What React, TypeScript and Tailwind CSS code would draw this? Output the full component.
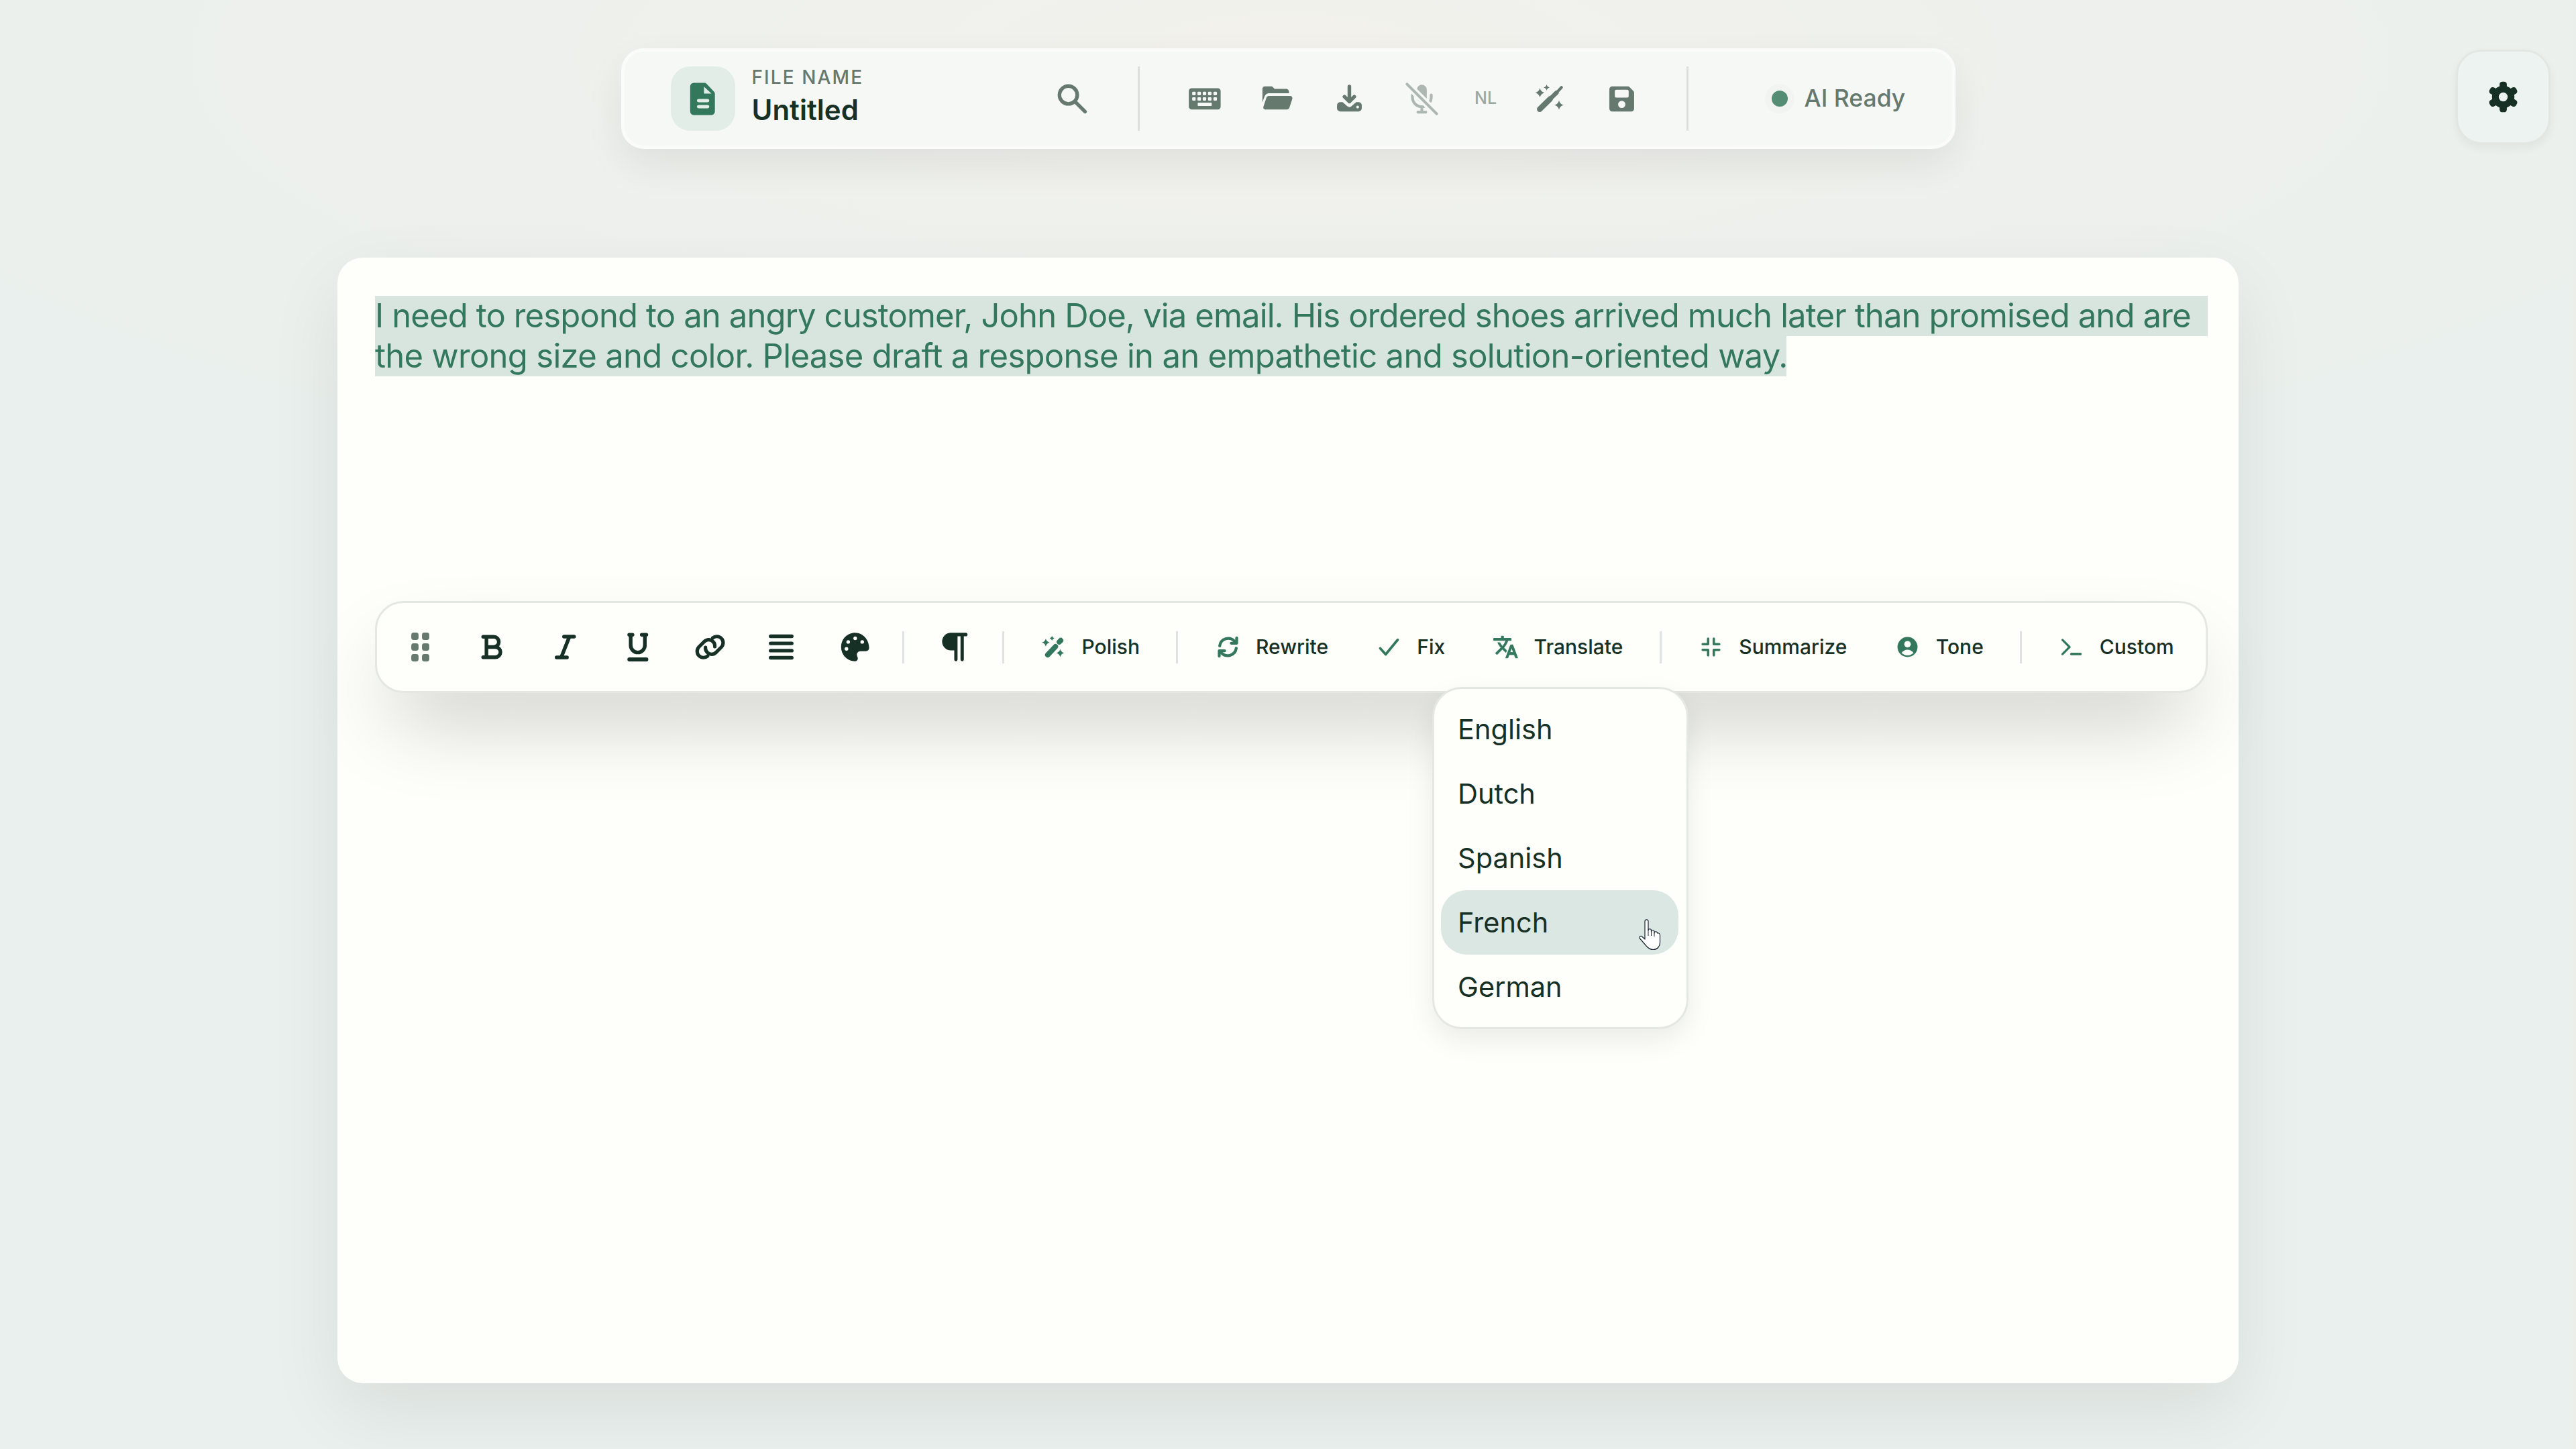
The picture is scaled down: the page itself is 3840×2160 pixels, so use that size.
import type { ReactNode } from 'react';

const BAR_BG = '#f6f8f5';
const CARD_BG = '#fefffb';

function Ico({ size = 59, className = '', children }: { size?: number; className?: string; children: ReactNode }) {
  return (
    <svg width={size} height={size} viewBox="0 0 24 24" fill="currentColor" className={`shrink-0 ${className}`}>
      {children}
    </svg>
  );
}

function Strokes({ w = 2.2, children }: { w?: number; children: ReactNode }) {
  return (
    <g fill="none" stroke="currentColor" strokeWidth={w} strokeLinecap="round" strokeLinejoin="round">
      {children}
    </g>
  );
}

// four point star used by the wand icons
function star(x: number, y: number, r: number) {
  const c = r * 0.2;
  return `M${x} ${y - r}Q${x + c} ${y - c} ${x + r} ${y}Q${x + c} ${y + c} ${x} ${y + r}Q${x - c} ${y + c} ${x - r} ${y}Q${x - c} ${y - c} ${x} ${y - r}Z`;
}

const SearchIcon = () => (
  <Ico>
    <Strokes>
      <circle cx="9.6" cy="9.6" r="5.4" />
      <path d="M13.6 13.6 19.7 19.7" />
    </Strokes>
  </Ico>
);

const KeyboardIcon = () => {
  const xs = [5.6, 8.8, 12, 15.2, 18.5];
  return (
    <Ico>
      <rect x="2.5" y="5.5" width="19.3" height="12.9" rx="1.7" />
      {[8.7, 12].map((y) =>
        xs.map((x) => <rect key={`${x}-${y}`} x={x - 1.05} y={y - 1.05} width="2.1" height="2.1" rx="0.5" fill={BAR_BG} />),
      )}
      <rect x="7.9" y="14.2" width="8.5" height="2.1" rx="0.4" fill={BAR_BG} />
    </Ico>
  );
};

const FolderIcon = () => (
  <Ico>
    <path d="M3.2 6a1.6 1.6 0 0 1 1.6-1.6h3.6c.5 0 .9.2 1.2.5l1 1h7c.9 0 1.7.8 1.7 1.7v.9H7.3C5.9 8.5 5 9.3 4.6 10.3L3.2 14z" />
    <path d="M7.2 10.2H20c1 0 1.6.9 1.3 1.8l-1.7 5.2c-.2.7-.8 1.2-1.6 1.2H5c-1 0-1.5-.8-1.2-1.7l1.8-5.4c.2-.7.8-1.1 1.6-1.1z" />
  </Ico>
);

const DownloadIcon = () => (
  <Ico>
    <Strokes>
      <path d="M12 4.5V13.6M9 10.6l3 3 3-3" />
    </Strokes>
    <path d="M6.5 13.9h1.4l2.9 2.6c.7.6 1.7.6 2.4 0l2.9-2.6h1.4a2 2 0 0 1 2 2v1.7a2 2 0 0 1-2 2h-11a2 2 0 0 1-2-2v-1.7a2 2 0 0 1 2-2z" />
    <circle cx="17" cy="16.9" r="0.85" fill={BAR_BG} />
  </Ico>
);

const MicOffIcon = () => (
  <Ico className="opacity-50">
    <rect x="9" y="3.4" width="6" height="10.6" rx="3" />
    <Strokes w={1.7}>
      <path d="M6.3 9.6v1.4a5.7 5.7 0 0 0 11.4 0V9.6M12 16.8v2.8M9.6 20h4.8" />
      <path d="M3 3 21 21" stroke={BAR_BG} strokeWidth="4.4" />
      <path d="M3 3 21 21" />
    </Strokes>
  </Ico>
);

const WandThinIcon = () => (
  <Ico>
    <path d={star(6.3, 8.2, 2.8)} />
    <path d={star(10.4, 5.1, 1.8)} />
    <path d={star(17.9, 15.7, 2.8)} />
    <g fill="none" stroke="currentColor" strokeLinecap="round">
      <path d="M6.2 18.2 12.5 12" strokeWidth="3.4" />
      <path d="M12.5 12 16.4 8.2" strokeWidth="2.6" />
      <path d="M16.4 8.2 19.4 5" strokeWidth="1.7" />
    </g>
  </Ico>
);

const SaveIcon = () => (
  <Ico>
    <path
      fillRule="evenodd"
      d="M6.2 4.4h9.4c.5 0 .9.2 1.2.5L19 7.1c.3.3.5.7.5 1.2v9.6a1.7 1.7 0 0 1-1.7 1.7H6.2a1.7 1.7 0 0 1-1.7-1.7V6.1a1.7 1.7 0 0 1 1.7-1.7zM8.7 6.4a.9.9 0 0 0-.9.9v3a.9.9 0 0 0 .9.9h6.6a.9.9 0 0 0 .9-.9v-3a.9.9 0 0 0-.9-.9zM12 13.1a2.2 2.2 0 1 0 0 4.4 2.2 2.2 0 0 0 0-4.4z"
    />
  </Ico>
);

const GearIcon = () => (
  <Ico>
    {[0, 60, 120].map((a) => (
      <rect key={a} x="9.8" y="2.7" width="4.4" height="18.6" rx="1.7" transform={`rotate(${a} 12 12)`} />
    ))}
    <circle cx="12" cy="12" r="6.8" />
    <circle cx="12" cy="12" r="2.7" fill="#edf3f1" />
  </Ico>
);

const FileIcon = () => (
  <Ico>
    <path d="M6.6 2.2H13c.5 0 1 .2 1.3.5l4.6 4.9c.3.3.5.8.5 1.2v10.8a2.2 2.2 0 0 1-2.2 2.2H6.6a2.2 2.2 0 0 1-2.2-2.2V4.4a2.2 2.2 0 0 1 2.2-2.2z" />
    <path d="M12.8 4.6v4.1h4.5z" fill="#e2ede8" />
    <rect x="8.5" y="12" width="7.5" height="2" rx="1" fill="#e2ede8" />
    <rect x="8.5" y="15.7" width="7.5" height="2" rx="1" fill="#e2ede8" />
  </Ico>
);

const GripIcon = () => (
  <Ico>
    {[8.75, 15.25].map((x) =>
      [5.5, 12, 18.5].map((y) => <rect key={`${x}-${y}`} x={x - 2.2} y={y - 2.2} width="4.4" height="4.4" rx="1.4" />),
    )}
  </Ico>
);

const BoldIcon = () => (
  <Ico>
    <Strokes>
      <path d="M6.6 5.8H13a3.1 3.1 0 0 1 0 6.2H8.6M8.6 12H14a3.1 3.1 0 0 1 0 6.2H6.6M8.6 5.8V18.2" />
    </Strokes>
  </Ico>
);

const ItalicIcon = () => (
  <Ico>
    <Strokes>
      <path d="M11.7 5.7h6.1M7.2 18.3h6.3M15 5.7 10 18.3" />
    </Strokes>
  </Ico>
);

const UnderlineIcon = () => (
  <Ico>
    <Strokes>
      <path d="M7.3 4.6h2M14.9 4.6h2.8M8.2 4.6V11a4.3 4.3 0 0 0 8.6 0V4.6" />
      <path d="M7.4 19.5h10.3" strokeWidth="2.4" />
    </Strokes>
  </Ico>
);

const LinkIcon = () => (
  <Ico>
    <Strokes w={2.1}>
      <path d="M10.9 17.5c-1.5 1.3-3.8 1.2-5.2-.2-1.5-1.5-1.5-3.9 0-5.4l3.2-3.2c1.5-1.5 3.9-1.5 5.3 0 .8.8 1.2 1.9 1.1 3.1" />
      <path d="M14 6.5c1.5-1.3 3.8-1.2 5.2.2 1.5 1.5 1.5 3.9 0 5.4L16 15.3c-1.5 1.5-3.9 1.5-5.3 0-.8-.8-1.2-1.9-1.1-3.1" />
    </Strokes>
  </Ico>
);

const JustifyIcon = () => (
  <Ico>
    <Strokes>
      <path d="M5.6 5.5h12.8M5.6 9.8h12.8M5.6 14.2h12.8M5.6 18.5h12.8" />
    </Strokes>
  </Ico>
);

const PaletteIcon = () => (
  <Ico>
    <path d="M12.9 3.4C8.1 3.3 4.4 7.1 4.4 12c0 4.8 3.8 8.6 8.4 8.6 1.2 0 1.9-.9 1.7-2-.2-.9-.7-1.6-.5-2.5.3-1 1.1-1.6 2.2-1.6h3.2c1.2 0 2-.8 2-2-.1-5-3.7-9-8.5-9.1z" />
    {[
      [8.7, 8.9],
      [12.95, 6.7],
      [17.2, 8.9],
      [7.65, 13.1],
    ].map(([x, y]) => (
      <circle key={x} cx={x} cy={y} r="1.1" fill={CARD_BG} />
    ))}
  </Ico>
);

const ParagraphIcon = () => (
  <Ico>
    <path d="M10 3.4h9.4a1.05 1.05 0 0 1 0 2.1h-1.2v14.1a1 1 0 0 1-2 0V5.5h-1.8v14.1a1 1 0 0 1-2 0V14h-1.7A5.3 5.3 0 0 1 10 3.4z" />
  </Ico>
);

const WandIcon = () => (
  <Ico size={39}>
    <path d={star(4.9, 7.9, 3.6)} />
    <path d={star(10.6, 4, 2.2)} />
    <path d={star(18.1, 17.5, 3.6)} />
    <g fill="none" stroke="currentColor" strokeLinecap="round" strokeWidth="4.8">
      <path d="M6.6 19.2 13.8 11.6" />
      <path d="M17.2 7.4 18.6 6" />
    </g>
  </Ico>
);

const RefreshIcon = () => (
  <Ico size={39}>
    <Strokes w={2.6}>
      <path d="M4.4 11A7.9 7.9 0 0 1 18 6.6L20 8.5M20 3.6v4.9h-5" />
      <path d="M19.6 13A7.9 7.9 0 0 1 6 17.4L4 15.5M4 20.4v-4.9h5" />
    </Strokes>
  </Ico>
);

const CheckIcon = () => (
  <Ico size={39}>
    <Strokes w={2.3}>
      <path d="M4 13.2 9 18.8 20 5.4" />
    </Strokes>
  </Ico>
);

const TranslateIcon = () => (
  <Ico size={39}>
    <path
      stroke="currentColor"
      strokeWidth="0.6"
      d="m12.87 15.07-2.54-2.51.03-.03c1.74-1.94 2.98-4.17 3.71-6.53H17V4h-7V2H8v2H1v1.99h11.17C11.5 7.92 10.44 9.75 9 11.35 8.07 10.32 7.3 9.19 6.69 8h-2c.73 1.63 1.73 3.17 2.98 4.56l-5.09 5.02L4 19l5-5 3.11 3.11.76-2.04zM18.5 10h-2L12 22h2l1.12-3h4.75L21 22h2l-4.5-12zm-2.62 7 1.62-4.33L19.12 17h-3.24z"
    />
  </Ico>
);

const CompressIcon = () => (
  <Ico size={39}>
    <Strokes>
      <path d="M9.4 4.4v5H4.4M14.6 4.4v5h5M4.4 14.6h5v5M19.6 14.6h-5v5" />
    </Strokes>
  </Ico>
);

const ToneIcon = () => (
  <Ico size={39}>
    <circle cx="12" cy="12" r="9.2" />
    <circle cx="12" cy="9.4" r="3" fill={CARD_BG} />
    <path d="M6.5 17.4c1.5-2 3.4-3 5.5-3s4 1 5.5 3c-1.5 1.5-3.4 2.3-5.5 2.3s-4-.8-5.5-2.3z" fill={CARD_BG} />
  </Ico>
);

const TerminalIcon = () => (
  <Ico size={39}>
    <Strokes w={2}>
      <path d="M4 5.5 10.5 12 4 18.5" />
      <path d="M12.2 18.4h8.2" strokeWidth="2.4" />
    </Strokes>
  </Ico>
);

function HandCursor() {
  return (
    <svg width="34" height="48" viewBox="0 0 34 48" className="absolute right-[25px] top-[42px]">
      <path
        d="M9 4.5c0-3.6 5-3.6 5 0V18c0-3 4.5-3 4.5 0v2c0-3 4.5-3 4.5 0v2c0-3 4.5-3 4.5 0 0 0 4-1 4 3V36c0 6-4 10.5-10 10.5-4 0-7-1.5-10-5L1.5 30c-2-2 1-4.5 3-3L9 31z"
        fill="#ffffff"
        stroke="#1b2433"
        strokeWidth="1.2"
        strokeLinejoin="round"
      />
      <path d="M14 18v8M18.5 20v6M23 22v5" fill="none" stroke="#1b2433" strokeWidth="1" />
    </svg>
  );
}

function BarButton({ children }: { children: ReactNode }) {
  return <button className="flex h-[98px] w-[98px] items-center justify-center text-[#65796f]">{children}</button>;
}

function ToolButton({ muted, children }: { muted?: boolean; children: ReactNode }) {
  return (
    <button className={`flex h-[98px] w-[98px] items-center justify-center ${muted ? 'text-[#65796f]' : 'text-[#163026]'}`}>
      {children}
    </button>
  );
}

function ActionButton({ icon, label }: { icon: ReactNode; label: string }) {
  return (
    <button className="flex h-[98px] items-center gap-[22.5px] px-[30.5px] text-[30px] font-medium text-[#173026]">
      <span className="text-[#33785c]">{icon}</span>
      {label}
    </button>
  );
}

const Sep = () => <div className="mx-[14px] h-[48px] w-[3px] bg-[#e0e3df]" />;

const languages = ['English', 'Dutch', 'Spanish', 'French', 'German'];

export default function App() {
  return (
    <div className="relative min-h-screen bg-[radial-gradient(ellipse_60%_32%_at_50%_4%,#f2f1ec,#eaf0ed)] pt-[72px] font-[Inter,sans-serif]">
      <header className="mx-auto flex h-[150px] w-[1989px] items-center rounded-[34px] border-[5px] border-[#fbfcfa] bg-[#f6f8f5] pl-[69px] shadow-[0_24px_60px_rgba(0,0,0,0.07)]">
        <div className="flex h-[96px] w-[96px] items-center justify-center rounded-[29px] bg-[#e2ede8] text-[#33785c]">
          <FileIcon />
        </div>
        <div className="ml-[25px] flex w-[429px] flex-col">
          <span className="text-[28px] leading-[34px] font-medium tracking-[2.1px] text-[#66786f]">FILE NAME</span>
          <span className="text-[42px] leading-[64px] font-semibold text-[#173026]">Untitled</span>
        </div>
        <BarButton>
          <SearchIcon />
        </BarButton>
        <div className="mx-[48px] h-[96px] w-[3px] bg-[#dcdfdb]" />
        <div className="flex items-center gap-[10px]">
          <BarButton>
            <KeyboardIcon />
          </BarButton>
          <BarButton>
            <FolderIcon />
          </BarButton>
          <BarButton>
            <DownloadIcon />
          </BarButton>
          <BarButton>
            <MicOffIcon />
          </BarButton>
          <span className="w-[72px] text-center text-[25px] font-medium text-[#9aa8a1]">NL</span>
          <BarButton>
            <WandThinIcon />
          </BarButton>
          <BarButton>
            <SaveIcon />
          </BarButton>
        </div>
        <div className="ml-[47px] h-[96px] w-[3px] bg-[#dcdfdb]" />
        <div className="ml-[124px] flex items-center gap-[25px]">
          <span className="h-[24px] w-[24px] rounded-full bg-[#548c74] shadow-[0_0_0_10px_rgba(84,140,116,0.03)]" />
          <span className="text-[35.5px] font-medium text-[#65796f]">AI Ready</span>
        </div>
      </header>

      <button className="absolute top-[74px] right-[38px] flex h-[141px] w-[141px] items-center justify-center rounded-[38px] border-[3px] border-[#e3e7e4] bg-[#edf3f1] text-[#163026] shadow-[0_6px_14px_rgba(0,0,0,0.05)]">
        <GearIcon />
      </button>

      <main className="mx-auto mt-[162px] h-[1678px] w-[2834px] rounded-[38px] bg-[#fefffb] pt-[57px] pr-[46px] pl-[56px] shadow-[0_40px_110px_rgba(0,0,0,0.08)]">
        <div className="text-[49px] leading-[60px] whitespace-nowrap text-[#33785c]">
          <div className="bg-[#d7e5de] tracking-[-0.87px]">I need to respond to an angry customer, John Doe, via email. His ordered shoes arrived much later than promised and are</div>
          <div className="w-[2104px] bg-[#d7e5de] tracking-[-0.7px]">the wrong size and color. Please draft a response in an empathetic and solution-oriented way.</div>
        </div>

        <div className="relative mt-[335px] flex h-[137px] items-center gap-[9.76px] rounded-[42px] border-[3px] border-[#e5e7e3] bg-[#fefffb] pl-[15px] shadow-[0_61px_122px_-29px_rgba(0,0,0,0.25)]">
          <ToolButton muted>
            <GripIcon />
          </ToolButton>
          <ToolButton>
            <BoldIcon />
          </ToolButton>
          <ToolButton>
            <ItalicIcon />
          </ToolButton>
          <ToolButton>
            <UnderlineIcon />
          </ToolButton>
          <ToolButton>
            <LinkIcon />
          </ToolButton>
          <ToolButton>
            <JustifyIcon />
          </ToolButton>
          <ToolButton>
            <PaletteIcon />
          </ToolButton>
          <Sep />
          <ToolButton>
            <ParagraphIcon />
          </ToolButton>
          <Sep />
          <ActionButton icon={<WandIcon />} label="Polish" />
          <Sep />
          <ActionButton icon={<RefreshIcon />} label="Rewrite" />
          <ActionButton icon={<CheckIcon />} label="Fix" />
          <ActionButton icon={<TranslateIcon />} label="Translate" />
          <Sep />
          <ActionButton icon={<CompressIcon />} label="Summarize" />
          <ActionButton icon={<ToneIcon />} label="Tone" />
          <Sep />
          <ActionButton icon={<TerminalIcon />} label="Custom" />

          <ul className="absolute top-[125px] left-[1573px] w-[382px] rounded-[44px] border-[3px] border-[#e5e7e3] bg-[#fefffb] py-[12px] pr-[12px] pl-[10px] shadow-[0_16px_40px_rgba(0,0,0,0.08)]">
            {languages.map((lang) => (
              <li
                key={lang}
                className={`relative flex h-[96px] items-center rounded-[38px] pl-[25px] text-[41.5px] text-[#173026] ${lang === 'French' ? 'bg-[#dbe7e3]' : ''}`}
              >
                {lang}
                {lang === 'French' && <HandCursor />}
              </li>
            ))}
          </ul>
        </div>
      </main>
      <div className="h-[98px]" />
      <div className="absolute inset-y-0 right-0 w-[5px] bg-[#eceeec]" />
    </div>
  );
}
